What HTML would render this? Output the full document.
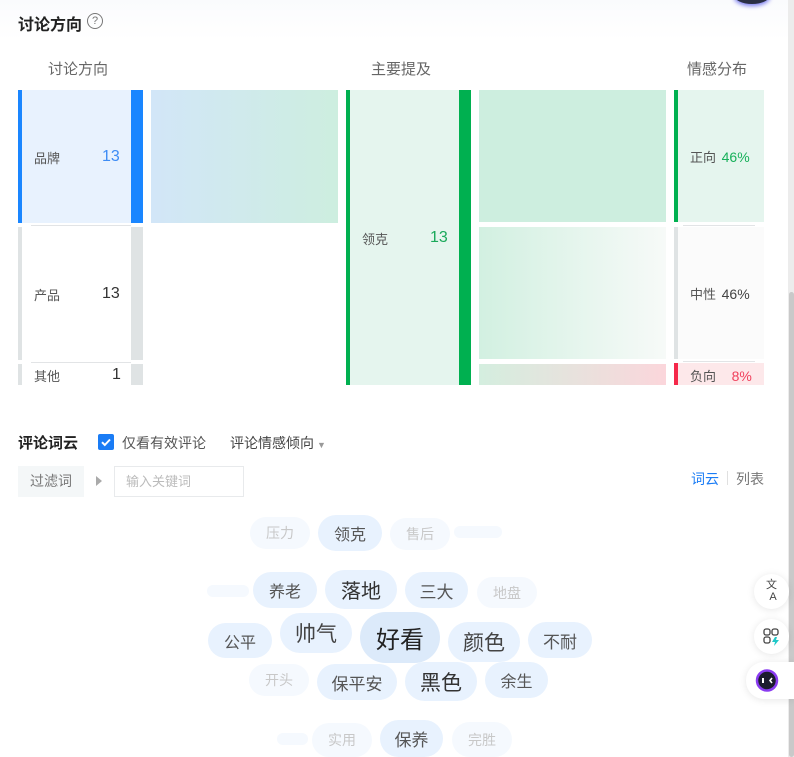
<!DOCTYPE html>
<html><head><meta charset="utf-8"><style>
*{margin:0;padding:0;box-sizing:border-box}
body{width:794px;height:757px;overflow:hidden;background:#fff;font-family:"Liberation Sans","Noto Sans CJK SC",sans-serif;position:relative;color:#333}
.a{position:absolute}
.t{position:absolute;font-size:13px;color:#555;white-space:nowrap}
.b{position:absolute;border-radius:20px;display:flex;align-items:center;justify-content:center;white-space:nowrap;background:#e8f2fe;color:#555;font-size:16px}
.f{background:#f5f9fe;color:#c8c8c8;font-size:14px}
</style></head><body>
<div class="a" style="left:0;top:0;width:788px;height:40px;background:linear-gradient(#fafbfd,#fff)"></div>
<div class="a" style="left:734px;top:-14px;width:36px;height:18px;border-radius:50%;background:#2a2f45;box-shadow:0 2px 4px #7a7cf0"></div>
<div class="t" style="left:18px;top:11px;font-size:16px;font-weight:bold;color:#222">讨论方向</div>
<div class="a" style="left:87px;top:13px;width:16px;height:16px;border:1.2px solid #777;border-radius:50%;font-size:11px;color:#777;text-align:center;line-height:14px">?</div>

<div class="t" style="left:48px;top:58px;font-size:15px;color:#666">讨论方向</div>
<div class="t" style="left:371px;top:58px;font-size:15px;color:#666">主要提及</div>
<div class="t" style="left:687px;top:58px;font-size:15px;color:#666">情感分布</div>

<!-- left -->
<div class="a" style="left:18px;top:90px;width:4px;height:133px;background:#1a86ff"></div>
<div class="a" style="left:22px;top:90px;width:109px;height:133px;background:#e8f2fe"></div>
<div class="a" style="left:131px;top:90px;width:12px;height:133px;background:#1a86ff"></div>
<div class="t" style="left:34px;top:148px">品牌</div>
<div class="t" style="left:102px;top:148px;font-size:16px;color:#3d8cf5">13</div>
<div class="a" style="left:31px;top:225px;width:100px;height:1px;background:#e2e4e6"></div>
<div class="a" style="left:18px;top:227px;width:4px;height:133px;background:#dfe3e4"></div>
<div class="a" style="left:131px;top:227px;width:12px;height:133px;background:#dfe3e4"></div>
<div class="t" style="left:34px;top:285px">产品</div>
<div class="t" style="left:102px;top:285px;font-size:16px;color:#333">13</div>
<div class="a" style="left:31px;top:362px;width:100px;height:1px;background:#e2e4e6"></div>
<div class="a" style="left:18px;top:364px;width:4px;height:21px;background:#dfe3e4"></div>
<div class="a" style="left:131px;top:364px;width:12px;height:21px;background:#dfe3e4"></div>
<div class="t" style="left:34px;top:366px">其他</div>
<div class="t" style="left:112px;top:366px;font-size:16px;color:#333">1</div>

<div class="a" style="left:151px;top:90px;width:187px;height:133px;background:linear-gradient(90deg,#d2e6f8,#cdeedf)"></div>

<!-- middle -->
<div class="a" style="left:346px;top:90px;width:4px;height:295px;background:#00b050"></div>
<div class="a" style="left:350px;top:90px;width:109px;height:295px;background:#e5f5ee"></div>
<div class="a" style="left:459px;top:90px;width:12px;height:295px;background:#00b050"></div>
<div class="t" style="left:362px;top:229px">领克</div>
<div class="t" style="left:430px;top:229px;font-size:16px;color:#1aa95a">13</div>

<div class="a" style="left:479px;top:90px;width:187px;height:132px;background:#cdeedf"></div>
<div class="a" style="left:479px;top:227px;width:187px;height:132px;background:linear-gradient(90deg,#d2f0e1,#f7faf8)"></div>
<div class="a" style="left:479px;top:364px;width:187px;height:21px;background:linear-gradient(90deg,#d4eedf,#fbd6db)"></div>

<!-- right -->
<div class="a" style="left:674px;top:90px;width:4px;height:132px;background:#00b050"></div>
<div class="a" style="left:678px;top:90px;width:86px;height:132px;background:#e5f5ee"></div>
<div class="t" style="left:690px;top:147px">正向 <span style="color:#17b05a;font-size:14px;margin-left:2px">46%</span></div>
<div class="a" style="left:683px;top:225px;width:72px;height:1px;background:#e2e4e6"></div>
<div class="a" style="left:674px;top:227px;width:4px;height:132px;background:#dfe3e4"></div>
<div class="a" style="left:678px;top:227px;width:86px;height:132px;background:#fbfbfb"></div>
<div class="t" style="left:690px;top:284px">中性 <span style="color:#444;font-size:14px;margin-left:2px">46%</span></div>
<div class="a" style="left:683px;top:361px;width:72px;height:1px;background:#e2e4e6"></div>
<div class="a" style="left:674px;top:363px;width:4px;height:22px;background:#f5284a"></div>
<div class="a" style="left:678px;top:363px;width:86px;height:22px;background:#fde8ea"></div>
<div class="t" style="left:690px;top:366px">负向 <span style="color:#f0405c;font-size:14px;margin-left:12px">8%</span></div>

<!-- scrollbar -->
<div class="a" style="left:788px;top:0;width:6px;height:757px;background:#ececec"></div>
<div class="a" style="left:789px;top:292px;width:5px;height:465px;background:#c9c9c9;border-radius:3px"></div>

<!-- word cloud header -->
<div class="t" style="left:18px;top:432px;font-size:15px;font-weight:bold;color:#222">评论词云</div>
<div class="a" style="left:98px;top:434px;width:16px;height:16px;background:#1a7cf5;border-radius:2px"><svg width="16" height="16"><path d="M4 8.2l2.8 2.8L12 5.5" stroke="#fff" stroke-width="2" fill="none"/></svg></div>
<div class="t" style="left:122px;top:433px;font-size:14px;color:#555">仅看有效评论</div>
<div class="t" style="left:230px;top:433px;font-size:14px;color:#444">评论情感倾向<span style="font-size:9px;color:#999;margin-left:3px">▼</span></div>

<div class="a" style="left:18px;top:466px;width:66px;height:31px;background:#f4f7f8;font-size:14px;color:#777;text-align:center;line-height:31px">过滤词</div>
<div class="a" style="left:96px;top:476px;width:0;height:0;border-left:6px solid #aaa;border-top:5px solid transparent;border-bottom:5px solid transparent"></div>
<div class="a" style="left:114px;top:466px;width:130px;height:31px;border:1px solid #e8eaec;font-size:13px;color:#bbb;line-height:29px;padding-left:11px">输入关键词</div>
<div class="t" style="left:691px;top:469px;font-size:14px;color:#1a7cf5">词云</div>
<div class="a" style="left:727px;top:471px;width:1px;height:14px;background:#e0e0e0"></div>
<div class="t" style="left:736px;top:469px;font-size:14px;color:#777">列表</div>

<!-- bubbles -->
<div class="b f" style="left:250px;top:517px;width:60px;height:32px">压力</div>
<div class="b" style="left:318px;top:515px;width:64px;height:36px">领克</div>
<div class="b f" style="left:390px;top:518px;width:60px;height:32px">售后</div>
<div class="b f" style="left:454px;top:526px;width:48px;height:12px"></div>
<div class="b f" style="left:207px;top:585px;width:42px;height:12px"></div>
<div class="b" style="left:253px;top:572px;width:64px;height:36px">养老</div>
<div class="b" style="left:325px;top:570px;width:72px;height:39px;font-size:20px;color:#333">落地</div>
<div class="b" style="left:405px;top:572px;width:63px;height:36px;font-size:17px">三大</div>
<div class="b f" style="left:477px;top:577px;width:60px;height:31px">地盘</div>
<div class="b" style="left:208px;top:623px;width:64px;height:35px">公平</div>
<div class="b" style="left:280px;top:613px;width:72px;height:40px;font-size:21px;color:#444">帅气</div>
<div class="b" style="left:360px;top:612px;width:80px;height:51px;font-size:24px;color:#222;background:#dceafa;border-radius:26px">好看</div>
<div class="b" style="left:448px;top:622px;width:72px;height:40px;font-size:21px;color:#444">颜色</div>
<div class="b" style="left:528px;top:622px;width:64px;height:36px;font-size:17px">不耐</div>
<div class="b f" style="left:249px;top:664px;width:60px;height:32px">开头</div>
<div class="b" style="left:317px;top:664px;width:80px;height:36px;font-size:17px">保平安</div>
<div class="b" style="left:405px;top:662px;width:72px;height:39px;font-size:21px;color:#333">黑色</div>
<div class="b" style="left:485px;top:662px;width:63px;height:36px">余生</div>
<div class="b f" style="left:277px;top:733px;width:31px;height:12px"></div>
<div class="b f" style="left:312px;top:723px;width:60px;height:34px">实用</div>
<div class="b" style="left:380px;top:720px;width:63px;height:37px;font-size:17px">保养</div>
<div class="b f" style="left:452px;top:722px;width:60px;height:35px">完胜</div>

<!-- floating buttons -->
<div class="a" style="left:754px;top:574px;width:35px;height:35px;border-radius:50%;background:#fff;box-shadow:0 1px 8px rgba(0,0,0,.1);font-size:11px;color:#444;text-align:center;line-height:12px;padding-top:5px">文<br>&nbsp;A</div>
<div class="a" style="left:754px;top:619px;width:35px;height:35px;border-radius:50%;background:#fff;box-shadow:0 1px 8px rgba(0,0,0,.1)"><svg width="35" height="35"><rect x="10" y="10" width="6" height="6" rx="2" fill="none" stroke="#444" stroke-width="1.3"/><rect x="18" y="10" width="6" height="6" rx="2" fill="none" stroke="#444" stroke-width="1.3"/><rect x="10" y="18" width="6" height="6" rx="2" fill="none" stroke="#444" stroke-width="1.3"/><path d="M21 18l-3 5h3l-1 4 5-6h-3l1-3z" fill="#1fc8c8"/></svg></div>
<div class="a" style="left:746px;top:662px;width:48px;height:37px;border-radius:18px 0 0 18px;background:#fff;box-shadow:0 1px 8px rgba(0,0,0,.1)"><svg width="40" height="37"><circle cx="21" cy="18.5" r="10" fill="#1c1c2e" stroke="#8a3cf0" stroke-width="2.5"/><rect x="16" y="16" width="2" height="5" fill="#fff"/><path d="M26 16l-2 2.5 2 2.5" stroke="#fff" stroke-width="1.6" fill="none"/></svg></div>
</body></html>
